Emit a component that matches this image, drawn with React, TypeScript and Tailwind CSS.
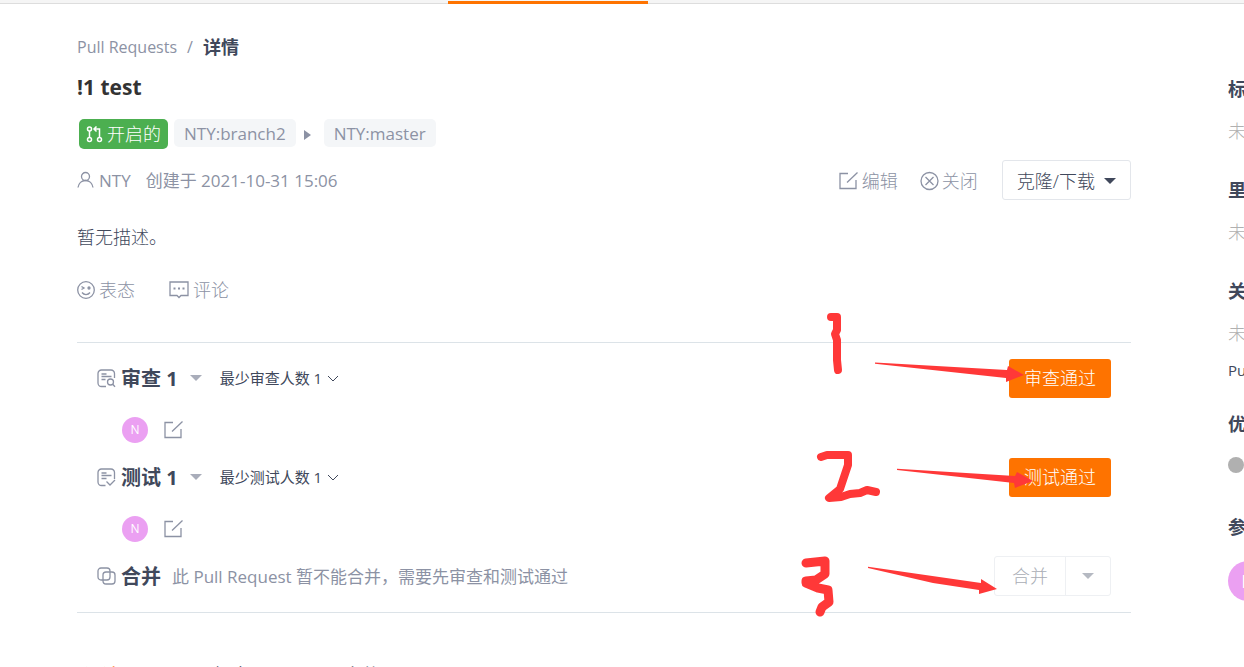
import React from "react";

const EditIcon: React.FC = () => (
  <svg width="20" height="20" viewBox="0 0 20 20" fill="none" stroke="#8c92a4" strokeWidth="1.3">
    <path d="M9 2.5H1v15h16V9" />
    <path d="M8 11.5L18.500 1.500" />
  </svg>
);

const PullRequestIcon: React.FC = () => (
  <svg width="17" height="17" viewBox="0 0 17 17" fill="none" stroke="#fff" strokeWidth="1.5">
    <circle cx="3.500" cy="3" r="2" />
    <circle cx="3.500" cy="13.500" r="2" />
    <circle cx="13.500" cy="13.500" r="2" />
    <path d="M3.500 5v6.500M13.500 11.500V3H8.500M10.500 .500L8 3l2.500 2.500" />
  </svg>
);

const UserIcon: React.FC = () => (
  <svg width="17" height="18" viewBox="0 0 17 18" fill="none" stroke="#8c92a4" strokeWidth="1.3">
    <circle cx="8.5" cy="5.5" r="4" />
    <path d="M1 16.5c.6-4 3.600-7 7.500-7s6.900 3 7.500 7" />
  </svg>
);

const CloseIcon: React.FC = () => (
  <svg width="20" height="20" viewBox="0 0 20 20" fill="none" stroke="#8c92a4" strokeWidth="1.3">
    <circle cx="9.500" cy="10" r="8.500" />
    <path d="M5.500 6l8 8M13.500 6l-8 8" />
  </svg>
);

const SmileIcon: React.FC = () => (
  <svg width="19" height="19" viewBox="0 0 19 19" fill="none" stroke="#8c92a4" strokeWidth="1.3">
    <circle cx="9" cy="9" r="8.300" />
    <path d="M4.500 5.500l2.500 1.500-2.500 1.500M5 11.500c2 2.700 6 2.700 8 0" />
    <circle cx="12" cy="7" r="1" fill="#8c92a4" />
  </svg>
);

const CommentIcon: React.FC = () => (
  <svg width="20" height="18" viewBox="0 0 20 18" fill="none" stroke="#8c92a4" strokeWidth="1.3">
    <path d="M1 1h18v13.500h-7L10 16.500 8 14.500H1z" />
    <path d="M4.500 7.500h2M9 7.500h2M13.500 7.500h2" strokeWidth="2" />
  </svg>
);

const ReviewIcon: React.FC = () => (
  <svg width="19" height="19" viewBox="0 0 19 19" fill="none" stroke="#8c92a4" strokeWidth="1.3">
    <path d="M9 17.500H4.500a3.500 3.500 0 0 1-3.500-3.500V4.500A3.500 3.500 0 0 1 4.500 1h9.500A3.500 3.500 0 0 1 17.500 4.500V9" />
    <path d="M4.500 5h5M4.500 7.500h10M4.500 10.500h4" />
    <circle cx="13.500" cy="13" r="3" />
    <path d="M15.700 15.200L18 17.800" />
  </svg>
);

const TestIcon: React.FC = () => (
  <svg width="19" height="19" viewBox="0 0 19 19" fill="none" stroke="#8c92a4" strokeWidth="1.3">
    <path d="M8.500 17.500h-4A3.500 3.500 0 0 1 1 14V4.500A3.500 3.500 0 0 1 4.500 1h9.500a3.500 3.500 0 0 1 3.500 3.500V11" />
    <path d="M4.500 5h5M4.500 7.500h10M4.500 10.500h5M9.500 13.500l3.500 3.500 5-5" />
  </svg>
);

const MergeIcon: React.FC = () => (
  <svg width="19" height="19" viewBox="0 0 19 19" fill="none" stroke="#8c92a4" strokeWidth="1.3">
    <rect x="1" y="1" width="12" height="12" rx="3" />
    <rect x="6" y="5" width="12" height="12" rx="3" />
  </svg>
);

const Caret: React.FC<{ color: string }> = ({ color }) => (
  <svg width="12" height="6" viewBox="0 0 12 6" fill={color}>
    <path d="M0 0h12L6 6z" />
  </svg>
);

const Chevron: React.FC = () => (
  <svg width="12" height="7" viewBox="0 0 12 7" fill="none" stroke="#40485b">
    <path d="M1 1l5 5 5-5" />
  </svg>
);

type StageProps = {
  icon: React.ReactNode;
  title: string;
  required: string;
  action: string;
};

const Stage: React.FC<StageProps> = ({ icon, title, required, action }) => (
  <div className="mb-[14px]">
    <div className="flex h-10 items-center">
      {icon}
      <h2 className="ml-[5px] pt-[2px] text-xl font-bold">{title} 1</h2>
      <button aria-label={title} className="ml-3">
        <Caret color="#a9adba" />
      </button>
      <button className="ml-[18px] flex items-center gap-[5px] text-[15px]">
        {required} 1 <Chevron />
      </button>
      <button className="ml-auto h-[39px] rounded-[3px] bg-[#fe7300] px-[15px] text-lg font-light text-white">{action}</button>
    </div>
    <div className="mt-[19px] flex h-[26px] items-center gap-4 pl-[25px]">
      <span className="flex size-[26px] items-center justify-center rounded-full bg-[#eba0f2] text-xs text-white">N</span>
      <button aria-label="编辑">
        <EditIcon />
      </button>
    </div>
  </div>
);

const Annotations: React.FC = () => (
  <svg className="pointer-events-none absolute -top-[43px] right-0" width="340" height="320" viewBox="791 300 340 320" fill="#ff3838">
    <path d="M875 362.500L875 363.800 1006 378 1006 382 1024 375 1008 366 1007 370z" />
    <path d="M897 468.800L897 470 1014 483 1015 488 1033 481 1017 472 1015 476z" />
    <path d="M868 566.800L868 568 933 583 979 590 979 594 997 589 981 579 981 583z" />
    <g fill="none" stroke="#ff3838" strokeWidth="8" strokeLinecap="round" strokeLinejoin="round">
      <path d="M831 317L837 317 837 330 835 334 837 340 837 360 838 370" />
      <path d="M821 457L827 455 848 455 848 465 840 489 829 498 841 497 850 494 860 493 867 490 876 492" />
      <path d="M806 563L825 561 825 574 816 580 806 581 806 583 818 588 828 590 829 602 822 607 820 612" strokeWidth="9" />
    </g>
  </svg>
);

const sideGroups = [
  { title: "标签", value: "未设置" },
  { title: "里程碑", value: "未关联里程碑" },
  { title: "关联 Issue", value: "未关联" },
];

const App: React.FC = () => {
  return (
    <div className="h-screen overflow-hidden bg-white font-['Open_Sans','Noto_Sans_CJK_SC',sans-serif] text-[17px] leading-6 text-[#40485b]">
      <header className="h-1 border-b border-[#ddd] bg-[#f5f5f5] pt-px pl-[36%]">
        <div className="h-[3px] w-[200px] bg-[#fe7300]" />
      </header>

      <div className="flex gap-[97px] pl-[77px]">
        <main className="min-w-0 flex-1 pt-[31px]">
          <nav className="flex gap-[10px] text-base leading-6 text-[#8c92a4]">
            <a href="#pulls">Pull Requests</a>
            <span>/</span>
            <span className="text-lg leading-6 font-bold text-[#40485b]">详情</span>
          </nav>

          <h1 className="mt-3 text-[21px] leading-8 font-bold text-[#333]">!1 test</h1>

          <div className="mt-4 flex h-[30px] items-start pl-[2px] text-[#8c92a4]">
            <span className="flex h-[30px] items-center gap-1 rounded-[5px] bg-[#4caf50] px-[7px] text-lg font-light text-white">
              <PullRequestIcon />
              开启的
            </span>
            <a href="#branch2" className="ml-[6px] rounded-[5px] bg-[#f4f6f8] px-[10px] pt-[2px] leading-[26px]">NTY:branch2</a>
            <svg className="mx-2 mt-[11px]" width="12" height="10" viewBox="0 0 12 10" fill="#8c92a4">
              <path d="M0 0v10l7-5z" />
            </svg>
            <a href="#master" className="rounded-[5px] bg-[#f4f6f8] px-[10px] pt-[2px] leading-[26px]">NTY:master</a>
          </div>

          <div className="mt-[11px] flex h-10 items-center text-[#8c92a4]">
            <UserIcon />
            <a href="#nty" className="ml-[5px] pt-[2px]">NTY</a>
            <span className="ml-[15px] pt-[2px]">创建于 2021-10-31 15:06</span>
            <button className="ml-auto flex items-center gap-[3px] pt-[2px] text-lg font-light">
              <EditIcon />
              编辑
            </button>
            <button className="ml-[22px] flex items-center gap-[2px] pt-[2px] text-lg font-light">
              <CloseIcon />
              关闭
            </button>
            <button className="ml-6 flex h-10 items-center gap-[9px] rounded-[3px] border border-[#e3e6eb] px-[14px] pt-[2px] text-lg font-light text-[#40485b]">
              克隆/下载
              <Caret color="#40485b" />
            </button>
          </div>

          <p className="mt-[25px] text-lg leading-6 font-light">暂无描述。</p>

          <div className="mt-[29px] flex gap-[34px] text-lg leading-6 font-light text-[#8c92a4]">
            <button className="flex items-center gap-[3px]">
              <SmileIcon />
              表态
            </button>
            <button className="flex items-center gap-1">
              <CommentIcon />
              评论
            </button>
          </div>

          <section className="relative mt-10 border-y border-[#dce3e8] px-5 pt-[15px] pb-4">
            <Stage icon={<ReviewIcon />} title="审查" required="最少审查人数" action="审查通过" />
            <Stage icon={<TestIcon />} title="测试" required="最少测试人数" action="测试通过" />
            <div className="flex h-10 items-center">
              <MergeIcon />
              <h2 className="ml-[5px] pt-[2px] text-xl font-bold">合并</h2>
              <p className="ml-[11px] pt-[2px] text-[#8c92a4]">此 Pull Request 暂不能合并，需要先审查和测试通过</p>
              <div className="ml-auto flex h-10 rounded-[3px] border border-[#eef0f3] text-lg font-light text-[#a9adb5]">
                <button disabled className="px-[17px]">合并</button>
                <button disabled aria-label="合并方式" className="border-l border-[#eef0f3] px-4">
                  <Caret color="#b5b9c2" />
                </button>
              </div>
            </div>
            <Annotations />
          </section>

          <nav className="mt-[50px] flex gap-[94px] pl-[7px] text-lg leading-6">
            <a href="#comments" className="text-[#fe7300]">评论</a>
            <a href="#commits">提交</a>
            <a href="#files">文件</a>
          </nav>
        </main>

        <aside className="w-4 shrink-0 overflow-hidden pt-[73px] text-lg leading-6 whitespace-nowrap">
          {sideGroups.map((group) => (
            <div key={group.title} className="mb-[35px]">
              <h3 className="font-bold">{group.title}</h3>
              <p className="mt-[18px] font-light text-[#b0b0b0]">{group.value}</p>
            </div>
          ))}
          <p className="-mt-[22px] text-[15px] leading-6">Pull Request</p>
          <h3 className="mt-[30px] font-bold">优先级</h3>
          <div className="mt-[21px] size-4 rounded-full bg-[#b0b0b0]" />
          <h3 className="mt-[42px] font-bold">参与者</h3>
          <div className="mt-[22px] flex size-10 items-center justify-center rounded-full bg-[#eba0f2] text-white">N</div>
        </aside>
      </div>
    </div>
  );
};

export default App;
